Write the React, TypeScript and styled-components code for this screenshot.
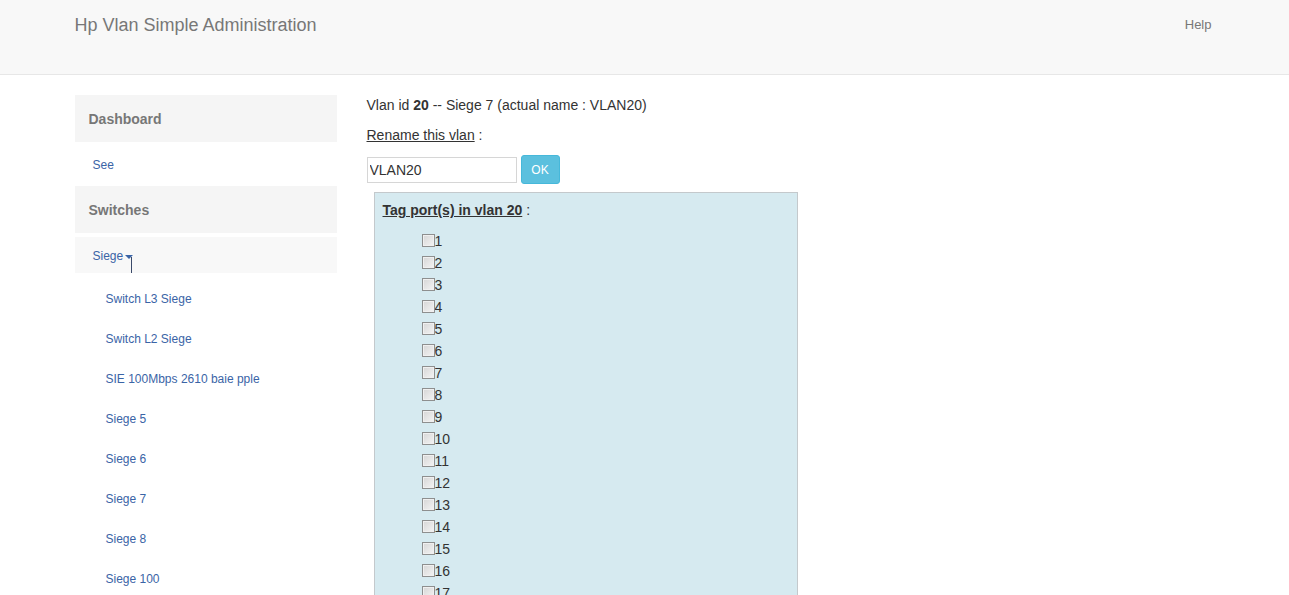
import React from "react";
import styled, { createGlobalStyle } from "styled-components";

const Global = createGlobalStyle`
  html, body { margin: 0; padding: 0; background: #fff; }
  body {
    font-family: "Liberation Sans", Arial, Helvetica, sans-serif;
    font-size: 14px;
    line-height: 20px;
    color: #333;
  }
  * { box-sizing: border-box; }
`;

const Navbar = styled.header`
  height: 75px;
  background: #f8f8f8;
  border-bottom: 1px solid #e7e7e7;
`;

const Container = styled.div`
  width: 1170px;
  margin: 0 auto;
  padding: 0 15px;
  display: flex;
`;

const NavInner = styled(Container)`
  justify-content: space-between;
  align-items: flex-start;
`;

const Brand = styled.div`
  font-size: 18px;
  line-height: 20px;
  color: #777;
  padding-top: 15px;
`;

const NavLink = styled.a`
  font-size: 13px;
  color: #777;
  line-height: 20px;
  padding-top: 15px;
  margin-right: 3px;
  text-decoration: none;
`;

const Body = styled(Container)`
  padding-top: 20px;
`;

const Sidebar = styled.nav`
  width: 262px;
  flex: none;
  display: flex;
  flex-direction: column;
  position: relative;
`;

const SideHeading = styled.div`
  height: 47px;
  background: #f5f5f5;
  font-weight: bold;
  color: #777;
  font-size: 14px;
  padding-left: 14px;
  display: flex;
  align-items: center;
`;

const SideLink = styled.a<{ $indent: number; $h: number; $bg?: string }>`
  display: flex;
  align-items: center;
  height: ${(p) => p.$h}px;
  padding-left: ${(p) => p.$indent}px;
  padding-top: 2px;
  background: ${(p) => p.$bg || "transparent"};
  font-size: 12px;
  color: #3a64a6;
  text-decoration: none;
`;

const Gap = styled.div<{ $h: number }>`
  height: ${(p) => p.$h}px;
  flex: none;
`;

const Caret = styled.span`
  display: inline-block;
  width: 0;
  height: 0;
  margin-left: 2px;
  margin-top: 2px;
  border-top: 4px solid #3a64a6;
  border-left: 4px solid transparent;
  border-right: 4px solid transparent;
`;

const Cursor = styled.span`
  position: absolute;
  left: 56px;
  top: 162px;
  width: 1px;
  height: 16px;
  background: #3a4a6a;
`;

const Main = styled.main`
  margin-left: 30px;
  flex: 1;
`;

const P = styled.p`
  margin: 0 0 10px;
  line-height: 20px;
`;

const U = styled.span`
  text-decoration: underline;
`;

const Form = styled.form`
  display: flex;
  align-items: center;
  gap: 4px;
  margin-top: 10px;
`;

const TextInput = styled.input`
  width: 150px;
  height: 26px;
  border: 1px solid #d6d6d6;
  padding: 0 2px;
  font: 14px "Liberation Sans", Arial, sans-serif;
  color: #333;
  outline: none;
`;

const Button = styled.button`
  width: 39px;
  height: 29px;
  background: #5bc0de;
  border: 1px solid #46b8da;
  border-radius: 3px;
  color: #fff;
  font: 12px "Liberation Sans", Arial, sans-serif;
  padding: 0;
`;

const PortBox = styled.section`
  margin: 8px 0 0 7px;
  width: 424px;
  background: #d6eaf0;
  border: 1px solid #c4c9cc;
  padding: 7px 8px 10px;
`;

const BoxTitle = styled.div`
  margin-bottom: 10px;
`;

const BoldU = styled.span`
  font-weight: bold;
  text-decoration: underline;
`;

const PortList = styled.ul`
  list-style: none;
  margin: 0;
  padding: 0 0 0 39px;
`;

const PortRow = styled.li`
  height: 22px;
  display: flex;
  align-items: center;
`;

const Check = styled.input`
  appearance: none;
  -webkit-appearance: none;
  margin: 0;
  width: 13px;
  height: 13px;
  border: 1px solid #8e8f8f;
  background: linear-gradient(135deg, #d6d6d6 0%, #f4f4f4 100%);
  box-shadow: inset 0 0 0 1px #f0f0f0;
  transform: translateY(-1px);
`;

const PortLabel = styled.span`
  color: #333;
  font-size: 14px;
`;

const switches = [
  "Switch L3 Siege",
  "Switch L2 Siege",
  "SIE 100Mbps 2610 baie pple",
  "Siege 5",
  "Siege 6",
  "Siege 7",
  "Siege 8",
  "Siege 100",
];

const ports = Array.from({ length: 24 }, (_, i) => i + 1);

export default function App() {
  return (
    <>
      <Global />
      <Navbar>
        <NavInner>
          <Brand>Hp Vlan Simple Administration</Brand>
          <NavLink href="#">Help</NavLink>
        </NavInner>
      </Navbar>
      <Body>
        <Sidebar>
          <SideHeading>Dashboard</SideHeading>
          <SideLink $indent={18} $h={44} href="#">See</SideLink>
          <SideHeading>Switches</SideHeading>
          <Gap $h={4} />
          <SideLink $indent={18} $h={36} $bg="#f8f8f8" href="#">
            Siege<Caret />
          </SideLink>
          <Cursor />
          <Gap $h={5} />
          {switches.map((s) => (
            <SideLink key={s} $indent={31} $h={40} href="#">
              {s}
            </SideLink>
          ))}
        </Sidebar>
        <Main>
          <P>
            Vlan id <b>20</b> -- Siege 7 (actual name : VLAN20)
          </P>
          <P>
            <U>Rename this vlan</U> :
          </P>
          <Form onSubmit={(e) => e.preventDefault()}>
            <TextInput defaultValue="VLAN20" />
            <Button type="submit">OK</Button>
          </Form>
          <PortBox>
            <BoxTitle>
              <BoldU>Tag port(s) in vlan 20</BoldU> :
            </BoxTitle>
            <PortList>
              {ports.map((p) => (
                <PortRow key={p}>
                  <Check type="checkbox" />
                  <PortLabel>{p}</PortLabel>
                </PortRow>
              ))}
            </PortList>
          </PortBox>
        </Main>
      </Body>
    </>
  );
}
